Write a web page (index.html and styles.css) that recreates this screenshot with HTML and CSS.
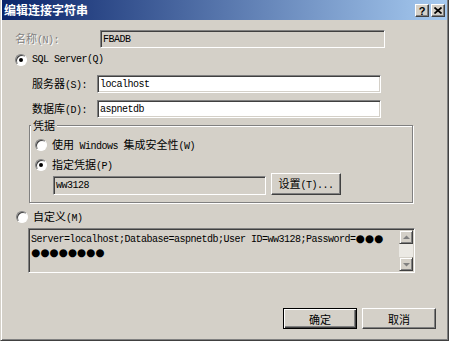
FILE: index.html
```html
<!DOCTYPE html>
<html lang="zh-CN">
<head>
    <meta charset="UTF-8">
    <meta name="viewport" content="width=device-width, initial-scale=1.0">
    <title>编辑连接字符串</title>
    <link rel="stylesheet" href="styles.css">
</head>
<body>
    <div class="window">
        <div class="titlebar">
            <span class="title">编辑连接字符串</span>
            <div class="caption-buttons">
                <button class="caption-btn help">?</button>
                <button class="caption-btn close">
                    <svg width="8" height="7" viewBox="0 0 8 7"><path d="M0.5 0.5 L7.5 6.5 M7.5 0.5 L0.5 6.5" stroke="#000" stroke-width="1.7" fill="none"/></svg>
                </button>
            </div>
        </div>

        <div class="content">
            <div class="row name-row">
                <span class="label disabled">名称<span class="mono">(N):</span></span>
                <div class="textbox readonly name-box"><span class="mono">FBADB</span></div>
            </div>

            <div class="row option sql-row">
                <span class="radio checked"></span>
                <span class="mono">SQL Server(Q)</span>
            </div>

            <div class="row field-row server-row">
                <span class="label">服务器<span class="mono">(S):</span></span>
                <div class="textbox wide"><span class="mono">localhost</span></div>
            </div>

            <div class="row field-row db-row">
                <span class="label">数据库<span class="mono">(D):</span></span>
                <div class="textbox wide"><span class="mono">aspnetdb</span></div>
            </div>

            <div class="group">
                <span class="legend">凭据</span>
                <div class="row option win-row">
                    <span class="radio"></span>
                    <span>使用<span class="mono"> Windows </span>集成安全性<span class="mono">(W)</span></span>
                </div>
                <div class="row option cred-row">
                    <span class="radio checked"></span>
                    <span>指定凭据<span class="mono">(P)</span></span>
                </div>
                <div class="row cred-fields">
                    <div class="textbox readonly user-box"><span class="mono">ww3128</span></div>
                    <button class="btn settings">设置<span class="mono">(T)...</span></button>
                </div>
            </div>

            <div class="row option custom-row">
                <span class="radio"></span>
                <span>自定义<span class="mono">(M)</span></span>
            </div>

            <div class="textarea">
                <div class="textarea-text mono">Server=localhost;Database=aspnetdb;User ID=ww3128;Password=<span class="dots">●●●</span><br><span class="dots">●●●●●●●●</span></div>
                <div class="scrollbar">
                    <span class="scroll-btn">
                        <svg width="7" height="5" viewBox="0 0 7 5"><polygon points="0,4 3.5,0.5 7,4" fill="#808080"/></svg>
                    </span>
                    <span class="scroll-track"></span>
                    <span class="scroll-btn">
                        <svg width="7" height="5" viewBox="0 0 7 5"><polygon points="0,1 3.5,4.5 7,1" fill="#808080"/></svg>
                    </span>
                </div>
            </div>

            <div class="row actions">
                <button class="btn default">确定</button>
                <button class="btn">取消</button>
            </div>
        </div>
    </div>
</body>
</html>
```

FILE: styles.css
```css
body {
    margin: 0;
    background-color: #fff;
    font-family: "Noto Sans CJK SC", sans-serif;
    font-size: 11px;
    color: #000;
}

.window {
    width: 449px;
    height: 341px;
    box-sizing: border-box;
    background-color: #d4d0c8;
    border-left: 1px solid #d4d0c8;
    border-right: 1px solid #404040;
    border-bottom: 1px solid #404040;
    padding: 0 1px 1px 1px;
    box-shadow: inset 1px 0 0 #fff, inset -1px -1px 0 #808080;
}

.titlebar {
    height: 20px;
    display: flex;
    justify-content: space-between;
    align-items: flex-start;
    background: linear-gradient(to right, #0a246a, #a6caf0);
}

.title {
    color: #fff;
    font-weight: bold;
    font-size: 12px;
    line-height: 20px;
    padding-left: 2px;
}

.caption-buttons {
    display: flex;
    gap: 2px;
    margin: 4px 2px 0 0;
}

.caption-btn {
    width: 14px;
    height: 13px;
    box-sizing: border-box;
    padding: 0;
    background-color: #d4d0c8;
    border: 1px solid;
    border-color: #fff #404040 #404040 #fff;
    box-shadow: inset -1px -1px 0 #808080;
    display: flex;
    justify-content: center;
    align-items: center;
    font: bold 11px "Liberation Sans", sans-serif;
    color: #000;
}

.mono {
    font-family: "Liberation Mono", monospace;
    font-size: 10px;
    letter-spacing: -0.5px;
}

.row {
    display: flex;
    align-items: center;
    line-height: 12px;
}

.label {
    white-space: nowrap;
}

.disabled {
    color: #808080;
    text-shadow: 1px 1px 0 #fff;
}

.textbox {
    box-sizing: border-box;
    height: 18px;
    background-color: #fff;
    border: 1px solid;
    border-color: #808080 #fff #fff #808080;
    box-shadow: inset 1px 1px 0 #404040, inset -1px -1px 0 #d4d0c8;
    display: flex;
    align-items: center;
    padding: 1px 0 0 2px;
}

.textbox.readonly {
    background-color: #d4d0c8;
}

.name-row {
    height: 18px;
    margin: 10px 0 0 13px;
}

.name-row .label {
    width: 85px;
}

.name-box {
    width: 285px;
}

.option .radio {
    margin-right: 5px;
}

.radio {
    width: 12px;
    height: 12px;
    box-sizing: border-box;
    flex: none;
    border-radius: 50%;
    background-color: #fff;
    border: 1px solid;
    border-color: #808080 #fff #fff #808080;
    box-shadow: inset 1px 1px 0 #404040;
    display: flex;
    justify-content: center;
    align-items: center;
}

.radio.checked::after {
    content: "";
    width: 4px;
    height: 4px;
    border-radius: 50%;
    background-color: #000;
}

.sql-row {
    height: 14px;
    margin: 5px 0 0 13px;
}

.field-row {
    height: 18px;
    margin-left: 30px;
}

.field-row .label {
    width: 65px;
}

.server-row {
    margin-top: 8px;
}

.db-row {
    margin-top: 7px;
}

.wide {
    width: 284px;
}

.group {
    width: 384px;
    height: 78px;
    box-sizing: border-box;
    margin: 7px 0 0 27px;
    border: 1px solid #808080;
    box-shadow: inset 1px 1px 0 #fff, 1px 1px 0 #fff;
}

.legend {
    display: block;
    width: fit-content;
    margin: -7px 0 0 1px;
    padding: 0 2px;
    line-height: 12px;
    background-color: #d4d0c8;
}

.win-row {
    height: 14px;
    margin: 7px 0 0 5px;
}

.cred-row {
    height: 14px;
    margin: 6px 0 0 5px;
}

.cred-fields {
    align-items: flex-end;
    margin: 1px 0 0 23px;
}

.user-box {
    width: 213px;
    height: 19px;
}

.btn {
    box-sizing: border-box;
    width: 74px;
    height: 21px;
    padding: 0;
    background-color: #d4d0c8;
    border: 1px solid;
    border-color: #fff #404040 #404040 #fff;
    box-shadow: inset -1px -1px 0 #808080;
    font-family: "Noto Sans CJK SC", sans-serif;
    font-size: 11px;
    line-height: 12px;
    color: #000;
}

.btn.default {
    border: 1px solid #000;
    box-shadow: inset 1px 1px 0 #fff, inset -1px -1px 0 #404040, inset -2px -2px 0 #808080;
}

.settings {
    width: 70px;
    height: 22px;
    margin-left: 5px;
}

.custom-row {
    height: 14px;
    margin: 7px 0 0 14px;
}

.textarea {
    width: 387px;
    height: 45px;
    box-sizing: border-box;
    margin: 4px 0 0 26px;
    display: flex;
    background-color: #d4d0c8;
    border: 1px solid;
    border-color: #808080 #fff #fff #808080;
    box-shadow: inset 1px 1px 0 #404040, inset -1px -1px 0 #d4d0c8;
    padding: 1px;
}

.textarea-text {
    flex: 1;
    line-height: 12px;
    padding: 2px 0 0 1px;
    white-space: nowrap;
}

.dots {
    font-family: "DejaVu Sans", sans-serif;
    font-size: 10.5px;
    letter-spacing: 0;
}

.scrollbar {
    width: 14px;
    display: flex;
    flex-direction: column;
}

.scroll-btn {
    height: 14px;
    box-sizing: border-box;
    background-color: #d4d0c8;
    border: 1px solid;
    border-color: #d4d0c8 #404040 #404040 #d4d0c8;
    box-shadow: inset 1px 1px 0 #fff, inset -1px -1px 0 #808080;
    display: flex;
    justify-content: center;
    align-items: center;
}

.scroll-track {
    flex: 1;
    background-color: #ebe9e4;
}

.actions {
    justify-content: flex-end;
    gap: 5px;
    margin: 35px 11px 0 0;
}
```
